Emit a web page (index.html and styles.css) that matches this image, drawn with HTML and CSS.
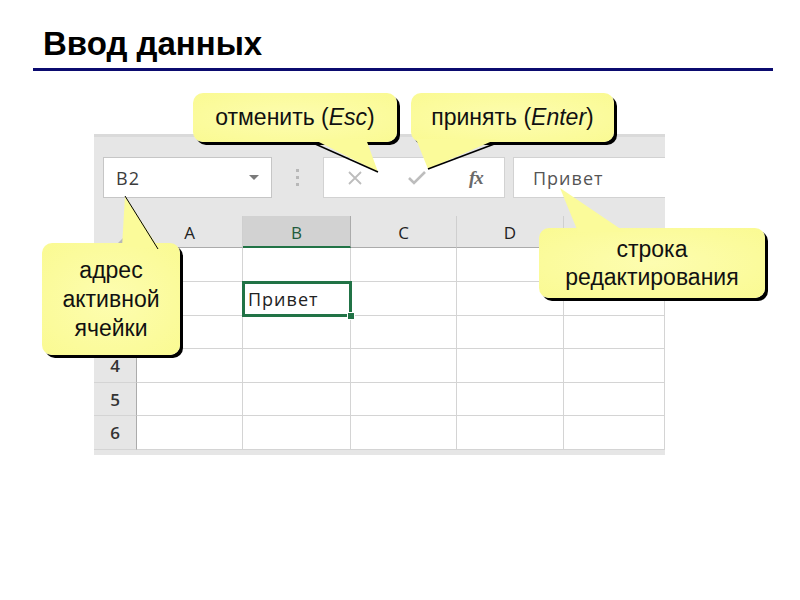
FILE: index.html
```html
<!DOCTYPE html>
<html lang="ru">
<head>
<meta charset="utf-8">
<title>Ввод данных</title>
<link rel="stylesheet" href="styles.css">
</head>
<body>
<div class="slide">
  <h1 class="title">Ввод данных</h1>
  <div class="rule"></div>

  <div class="excel">
    <div class="toolbar">
      <div class="namebox">
        <span class="nb-text">B2</span>
        <span class="nb-arrow"></span>
      </div>
      <div class="sep"><span></span><span></span><span></span></div>
      <div class="cmdbox">
        <svg class="ico-x" width="16" height="16" viewBox="0 0 16 16"><path d="M2 2 L14 14 M14 2 L2 14" stroke="#bdbdbd" stroke-width="1.8" fill="none"/></svg>
        <svg class="ico-v" width="20" height="16" viewBox="0 0 20 16"><path d="M2 8 L7 13 L18 2" stroke="#bdbdbd" stroke-width="2.6" fill="none"/></svg>
        <span class="fx">fx</span>
      </div>
      <div class="formula">Привет</div>
    </div>

    <div class="grid">
      <div class="h corner"></div>
      <div class="h">A</div>
      <div class="h sel">B</div>
      <div class="h">C</div>
      <div class="h">D</div>
      <div class="h last"></div>

      <div class="rh">1</div><div class="c"></div><div class="c"></div><div class="c"></div><div class="c"></div><div class="c"></div>
      <div class="rh">2</div><div class="c"></div><div class="c active"><span>Привет</span><i class="handle"></i></div><div class="c"></div><div class="c"></div><div class="c"></div>
      <div class="rh">3</div><div class="c"></div><div class="c"></div><div class="c"></div><div class="c"></div><div class="c"></div>
      <div class="rh">4</div><div class="c"></div><div class="c"></div><div class="c"></div><div class="c"></div><div class="c"></div>
      <div class="rh">5</div><div class="c"></div><div class="c"></div><div class="c"></div><div class="c"></div><div class="c"></div>
      <div class="rh">6</div><div class="c"></div><div class="c"></div><div class="c"></div><div class="c"></div><div class="c"></div>
    </div>
  </div>

  <div class="callout co-esc">отменить (<i>Esc</i>)</div>
  <div class="callout co-enter">принять (<i>Enter</i>)</div>
  <div class="callout co-addr">адрес<br>активной<br>ячейки</div>
  <div class="callout co-edit">строка<br>редактирования</div>

  <svg class="tails" width="800" height="600" viewBox="0 0 800 600">
    <polygon points="313,139 378,172 366,139" fill="#fbfb9a"/>
    <line x1="313" y1="143" x2="378" y2="172" stroke="#000" stroke-width="1.4"/>
    <polygon points="416,139 428,169 497,139" fill="#fbfb9a"/>
    <line x1="497" y1="143" x2="428" y2="169" stroke="#000" stroke-width="1.6"/>
    <polygon points="125,196 122,247 158,247" fill="#fbfb9a"/>
    <line x1="125" y1="196" x2="158" y2="249" stroke="#000" stroke-width="1"/>
    <polygon points="560,188 578,232 625,232" fill="#fbfb9a"/>
  </svg>
</div>
</body>
</html>
```
FILE: styles.css
```css
* { box-sizing: border-box; }
html, body { margin: 0; padding: 0; background: #fff; }
body { width: 800px; height: 600px; overflow: hidden; font-family: "Liberation Sans", Arial, sans-serif; }
.slide { position: relative; width: 800px; height: 600px; padding-top: 25px; }

.title {
  margin: 0 0 0 43px;
  font-size: 33px;
  line-height: 38px;
  font-weight: bold;
  color: #000;
}
.rule {
  margin: 5px 0 0 33px;
  width: 740px;
  height: 3px;
  background: #0b0b6f;
}

.excel {
  margin: 63px 0 0 94px;
  width: 571px;
  height: 321px;
  background: #e6e6e6;
  border-top: 3px solid #dadada;
  overflow: hidden;
  font-family: "Open Sans", "Noto Sans", sans-serif;
}
.toolbar {
  display: flex;
  align-items: stretch;
  height: 41px;
  margin-top: 20px;
  padding-left: 9px;
}
.toolbar > * { flex-shrink: 0; }
.namebox {
  width: 169px;
  background: #fff;
  border: 1px solid #c6c6c6;
  display: flex;
  align-items: center;
  justify-content: space-between;
  padding: 0 12px 0 12px;
}
.nb-text { font-size: 18px; letter-spacing: 1px; color: #3c3c3c; }
.nb-arrow {
  width: 0; height: 0;
  border-left: 5px solid transparent;
  border-right: 5px solid transparent;
  border-top: 5px solid #7a7a7a;
}
.sep {
  width: 51px;
  display: flex;
  flex-direction: column;
  align-items: center;
  justify-content: center;
  gap: 4px;
}
.sep span { width: 3px; height: 3px; background: #b8b8b8; }
.cmdbox {
  width: 182px;
  background: #fff;
  border: 1px solid #d2d2d2;
  display: flex;
  align-items: center;
  padding-left: 23px;
}
.ico-x { margin-right: 44px; }
.ico-v { margin-right: 42px; }
.fx {
  font-family: "Liberation Serif", serif;
  font-style: italic;
  font-weight: bold;
  font-size: 19px;
  color: #6a6a6a;
  letter-spacing: -1px;
}
.formula {
  width: 170px;
  margin-left: 8px;
  background: #fff;
  border: 1px solid #d2d2d2;
  display: flex;
  align-items: center;
  padding-left: 19px;
  font-size: 18px;
  letter-spacing: 1px;
  color: #555;
}

.grid {
  margin-top: 18px;
  display: grid;
  grid-template-columns: 43px 106px 108px 106px 107px 101px;
  grid-template-rows: 32px 34px 34px 33px 34px 33px 34px;
}
.h {
  background: #e6e6e6;
  border-right: 1px solid #cfcfcf;
  border-bottom: 1px solid #ababab;
  display: flex;
  align-items: center;
  justify-content: center;
  font-size: 17px;
  color: #222;
  padding-top: 2px;
}
.h.corner { position: relative; border-right-color: #ababab; }
.h.corner::after {
  content: "";
  position: absolute;
  right: 4px; bottom: 4px;
  width: 0; height: 0;
  border-left: 14px solid transparent;
  border-bottom: 14px solid #b8b8b8;
}
.h.sel {
  background: #d2d2d2;
  color: #225a3c;
  border-bottom: 2px solid #217346;
  border-right-color: #ababab;
}
.h.last { border-right: none; }
.rh {
  background: #e6e6e6;
  border-right: 1px solid #ababab;
  border-bottom: 1px solid #d4d4d4;
  display: flex;
  align-items: center;
  justify-content: center;
  font-size: 17px;
  font-weight: 600;
  color: #333;
}
.c {
  background: #fff;
  border-right: 1px solid #d4d4d4;
  border-bottom: 1px solid #d4d4d4;
}
.c.active {
  position: relative;
  display: flex;
  align-items: center;
  padding-left: 5px;
  font-size: 18px;
  letter-spacing: 1px;
  color: #222;
}
.c.active::after {
  content: "";
  position: absolute;
  left: -1px; top: -1px; right: -2px; bottom: -2px;
  border: 3px solid #217346;
}
.handle {
  position: absolute;
  right: -5px; bottom: -5px;
  width: 8px; height: 8px;
  background: #217346;
  border: 1px solid #fff;
  z-index: 2;
}

.callout {
  position: absolute;
  background: radial-gradient(ellipse at center, #fdfdb0 0%, #fafa92 100%);
  border-radius: 10px;
  box-shadow: 3px 3px 0 #000;
  font-family: "Liberation Sans", Arial, sans-serif;
  font-size: 23px;
  color: #111;
  display: flex;
  align-items: center;
  justify-content: center;
  text-align: center;
}
.co-esc { left: 193px; top: 93px; width: 204px; height: 49px; }
.co-enter { left: 411px; top: 93px; width: 203px; height: 49px; }
.co-addr { left: 42px; top: 243px; width: 138px; height: 112px; line-height: 29px; }
.co-edit { left: 539px; top: 228px; width: 226px; height: 70px; line-height: 28px; }
.tails { position: absolute; left: 0; top: 0; pointer-events: none; }
```
